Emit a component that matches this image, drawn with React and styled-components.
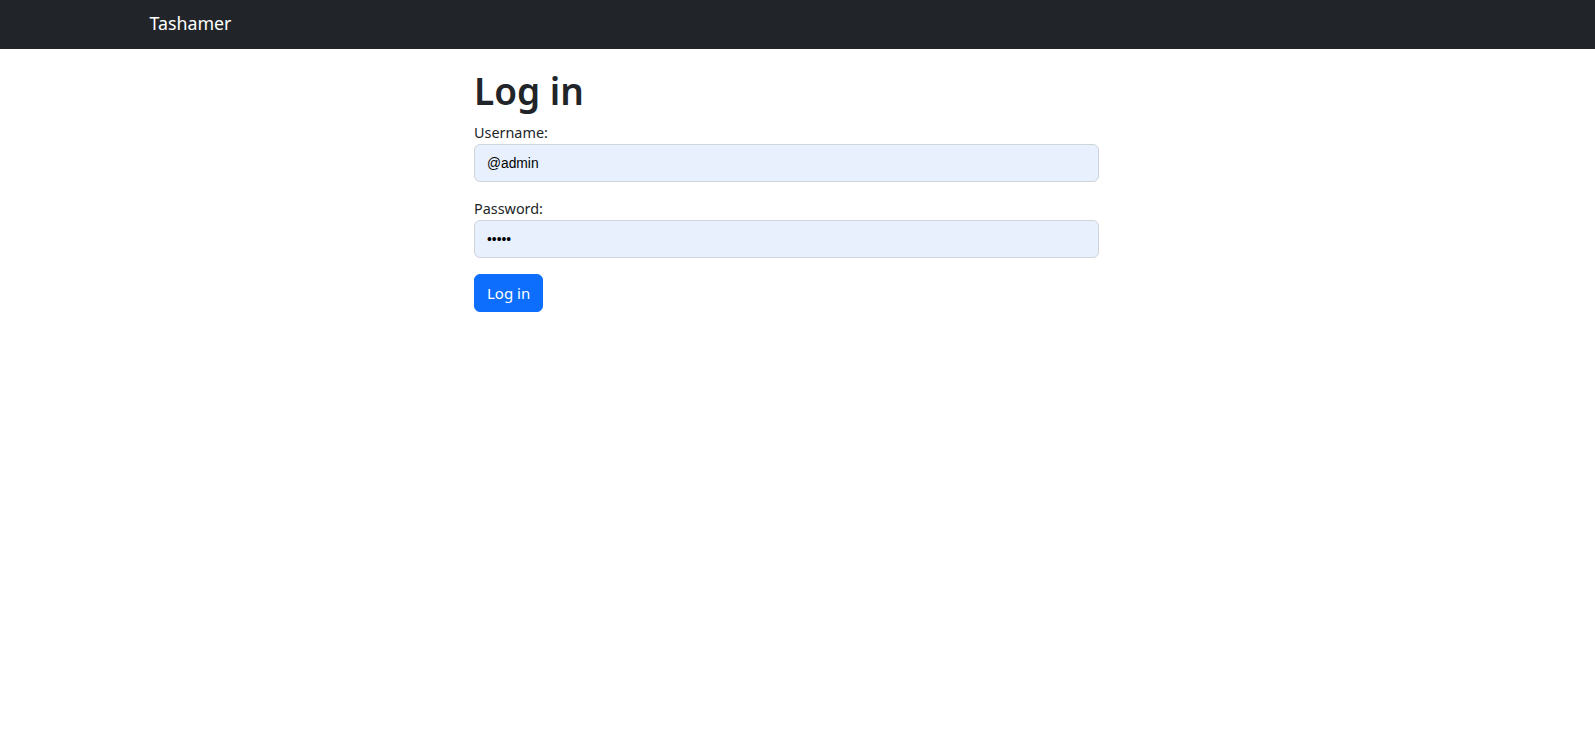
import React from "react";
import styled, { createGlobalStyle } from "styled-components";

const Global = createGlobalStyle`
  html, body { margin: 0; padding: 0; background: #fff; }
  body {
    font-family: "Segoe UI", "Noto Sans", "Liberation Sans", sans-serif;
    font-size: 16px;
    line-height: 1.5;
    color: #212529;
  }
  * { box-sizing: border-box; }
`;

const Navbar = styled.nav`
  background: #212529;
  height: 49px;
  display: flex;
  align-items: center;
`;

const NavContainer = styled.div`
  width: 100%;
  max-width: 1320px;
  margin: 0 auto;
  padding: 0 12px;
  display: flex;
  align-items: center;
`;

const Brand = styled.a`
  color: #fff;
  font-size: 17.8px;
  line-height: 30px;
  margin-top: -3px;
  text-decoration: none;
`;

const Main = styled.main`
  width: 625px;
  margin-left: calc(50% - 323.5px);
  padding-top: 17px;
`;

const Title = styled.h1`
  font-size: 37px;
  font-weight: 600;
  line-height: 50px;
  margin: 0 0 6px;
`;

const Field = styled.div`
  display: flex;
  flex-direction: column;
  margin-bottom: 16px;
`;

const Label = styled.label`
  font-size: 14.4px;
  line-height: 22px;
`;

const Input = styled.input`
  display: block;
  width: 100%;
  height: 38px;
  padding: 6px 12px;
  font-family: "Liberation Sans", Arial, sans-serif;
  font-size: 13.8px;
  color: #000;
  background: #e8f0fe;
  border: 1px solid #ced4da;
  border-radius: 6px;
  outline: none;
`;

const Button = styled.button`
  font-family: inherit;
  font-size: 15px;
  line-height: 24px;
  padding: 6px 12px;
  color: #fff;
  background: #0d6efd;
  border: 1px solid #0d6efd;
  border-radius: 6px;
  cursor: pointer;
`;

export default function App() {
  return (
    <>
      <Global />
      <Navbar>
        <NavContainer>
          <Brand href="#">Tashamer</Brand>
        </NavContainer>
      </Navbar>
      <Main>
        <Title>Log in</Title>
        <form onSubmit={(e) => e.preventDefault()}>
          <Field>
            <Label htmlFor="username">Username:</Label>
            <Input id="username" type="text" defaultValue="@admin" />
          </Field>
          <Field>
            <Label htmlFor="password">Password:</Label>
            <Input id="password" type="password" defaultValue="admin" />
          </Field>
          <Button type="submit">Log in</Button>
        </form>
      </Main>
    </>
  );
}
